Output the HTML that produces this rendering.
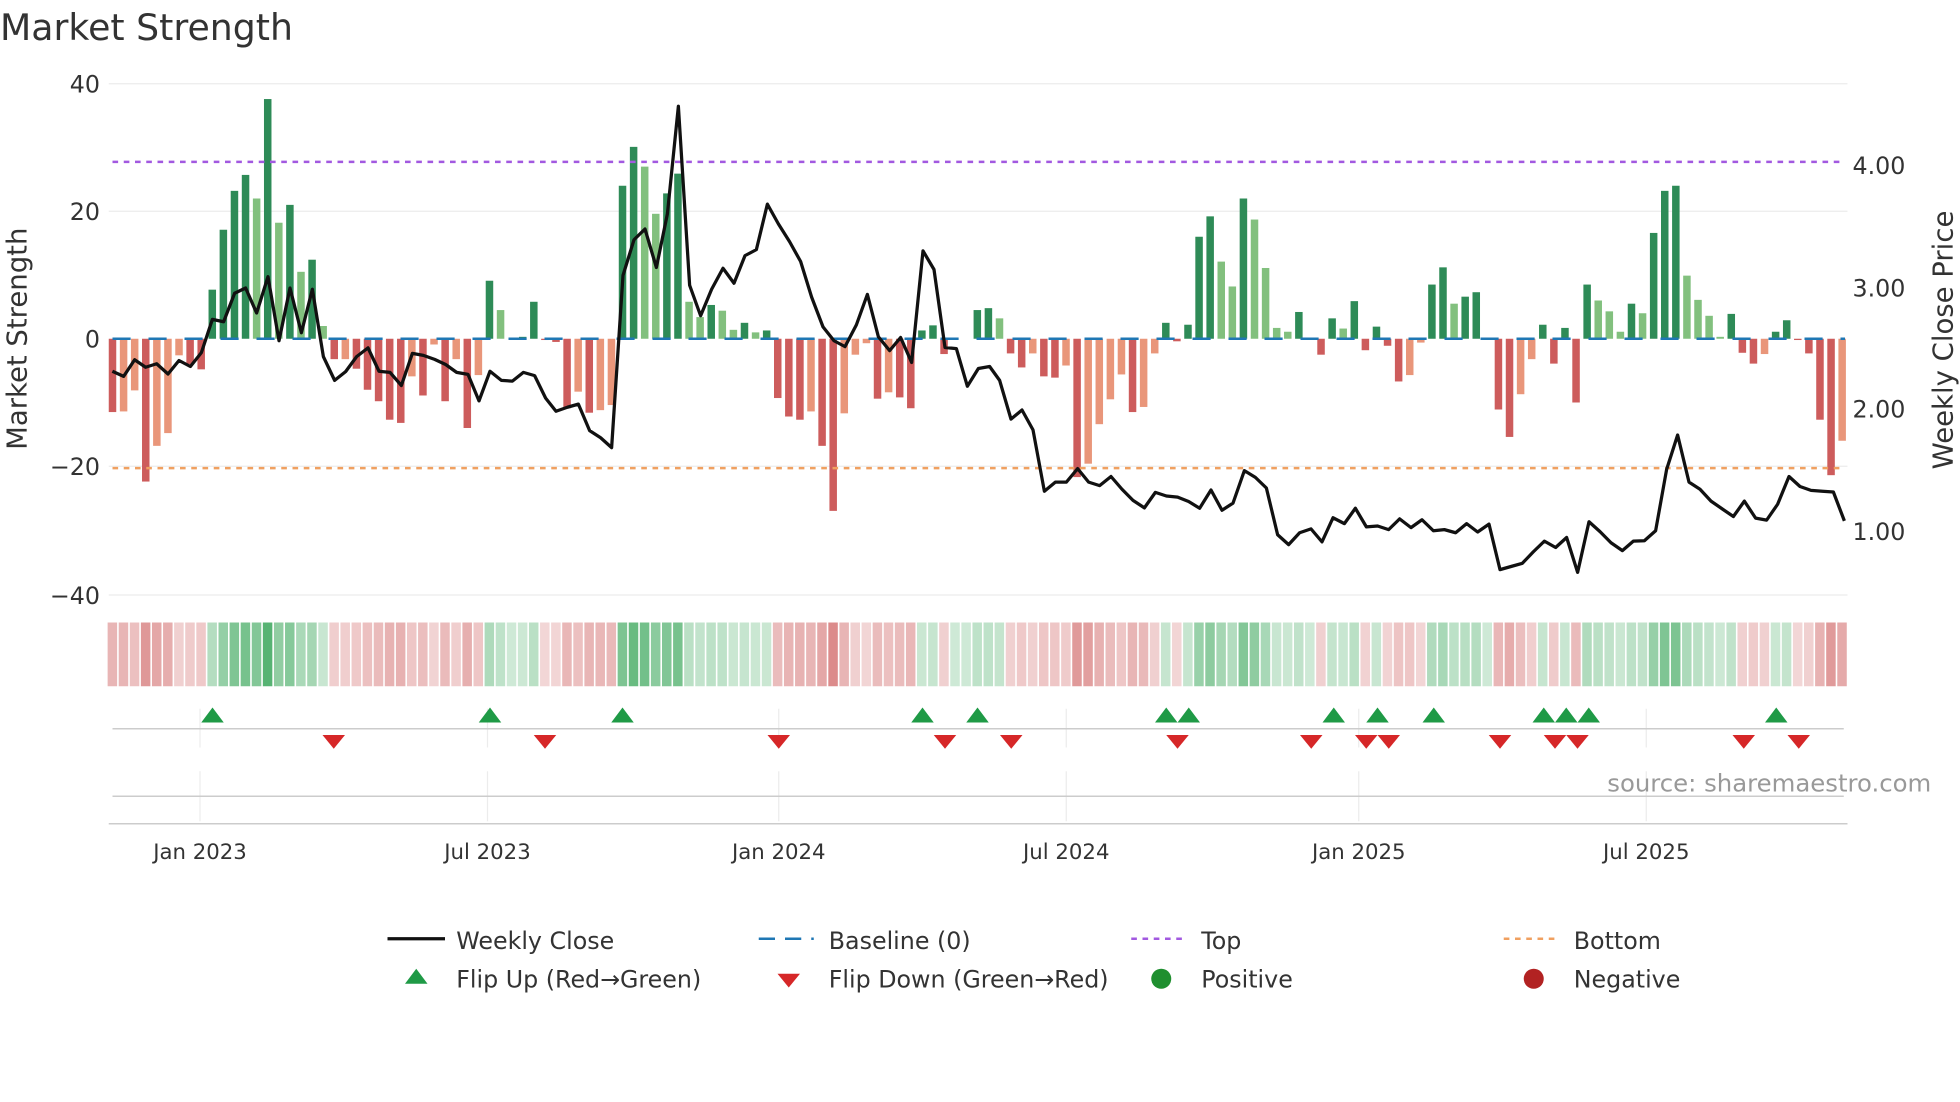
<!DOCTYPE html>
<html><head><meta charset="utf-8">
<style>
html,body{margin:0;padding:0;background:#fff;width:1960px;height:1102px;overflow:hidden}
svg{display:block}
text{font-family:"DejaVu Sans","Liberation Sans",sans-serif;fill:#333}
</style></head>
<body>
<svg id="s" xmlns="http://www.w3.org/2000/svg" width="1960" height="1102" viewBox="0 0 1568 881.6">
<rect width="1568" height="882" fill="#fff"/>
<text x="0" y="32" font-size="29">Market Strength</text>
<g stroke="#ececec" stroke-width="1">
<line x1="87" y1="67" x2="1478" y2="67"/>
<line x1="87" y1="169" x2="1478" y2="169"/>
<line x1="87" y1="373" x2="1478" y2="373"/>
<line x1="87" y1="476" x2="1478" y2="476"/>
</g>
<g id="bars"></g>
<line x1="90" y1="271" x2="1476" y2="271" stroke="#1f77b4" stroke-width="2" stroke-dasharray="14.5 14.3"/>
<line x1="90" y1="129.5" x2="1476" y2="129.5" stroke="#a259e0" stroke-width="2" stroke-dasharray="4.5 4.5"/>
<line x1="90" y1="374.5" x2="1476" y2="374.5" stroke="#f0a060" stroke-width="2" stroke-dasharray="4.5 4.5"/>
<polyline id="price" fill="none" stroke="#111" stroke-width="2.6" stroke-linejoin="round"/>
<g id="strip"></g>
<g font-size="19" text-anchor="end">
<text x="80" y="74">40</text><text x="80" y="176">20</text><text x="80" y="278">0</text>
<text x="80" y="380">−20</text><text x="80" y="483">−40</text>
</g>
<g font-size="19">
<text x="1482" y="139">4.00</text><text x="1482" y="237">3.00</text>
<text x="1482" y="334">2.00</text><text x="1482" y="432">1.00</text>
</g>
<text transform="translate(21,271) rotate(-90)" font-size="22" text-anchor="middle">Market Strength</text>
<text transform="translate(1562,272) rotate(-90)" font-size="22" text-anchor="middle">Weekly Close Price</text>
<g stroke="#ececec" stroke-width="1">
<line x1="160" y1="567" x2="160" y2="598"/><line x1="390" y1="567" x2="390" y2="598"/>
<line x1="623" y1="567" x2="623" y2="598"/><line x1="853" y1="567" x2="853" y2="598"/>
<line x1="1087" y1="567" x2="1087" y2="598"/><line x1="1317" y1="567" x2="1317" y2="598"/>
<line x1="160" y1="617" x2="160" y2="657"/><line x1="390" y1="617" x2="390" y2="657"/>
<line x1="623" y1="617" x2="623" y2="657"/><line x1="853" y1="617" x2="853" y2="657"/>
<line x1="1087" y1="617" x2="1087" y2="657"/><line x1="1317" y1="617" x2="1317" y2="657"/>
</g>
<line x1="90" y1="583" x2="1475" y2="583" stroke="#ccc" stroke-width="1.2"/>
<line x1="90" y1="637" x2="1475" y2="637" stroke="#ccc" stroke-width="1.2"/>
<line x1="87" y1="659" x2="1478" y2="659" stroke="#ccc" stroke-width="1.2"/>
<g id="tri"></g>
<text x="1545" y="633" font-size="19.5" text-anchor="end" style="fill:#999">source: sharemaestro.com</text>
<g font-size="17" text-anchor="middle">
<text x="160" y="687">Jan 2023</text><text x="390" y="687">Jul 2023</text>
<text x="623" y="687">Jan 2024</text><text x="853" y="687">Jul 2024</text>
<text x="1087" y="687">Jan 2025</text><text x="1317" y="687">Jul 2025</text>
</g>
<g font-size="19">
<line x1="310" y1="751" x2="356" y2="751" stroke="#111" stroke-width="2.6"/>
<text x="365" y="759">Weekly Close</text>
<line x1="607" y1="751" x2="651" y2="751" stroke="#1f77b4" stroke-width="2" stroke-dasharray="13 8"/>
<text x="663" y="759">Baseline (0)</text>
<line x1="905" y1="751" x2="950" y2="751" stroke="#a259e0" stroke-width="2" stroke-dasharray="4.5 4.5"/>
<text x="961" y="759">Top</text>
<line x1="1203" y1="751" x2="1248" y2="751" stroke="#f0a060" stroke-width="2" stroke-dasharray="4.5 4.5"/>
<text x="1259" y="759">Bottom</text>
<polygon points="324,787 342,787 333,775" fill="#1f9a46"/>
<text x="365" y="790">Flip Up (Red→Green)</text>
<polygon points="622,779 640,779 631,790" fill="#d62728"/>
<text x="663" y="790">Flip Down (Green→Red)</text>
<circle cx="929" cy="783" r="8" fill="#1f8f2f"/>
<text x="961" y="790">Positive</text>
<circle cx="1227" cy="783" r="8" fill="#b22222"/>
<text x="1259" y="790">Negative</text>
</g>
</svg>
<script>
var NS="http://www.w3.org/2000/svg";
function el(t,a,p){var e=document.createElementNS(NS,t);for(var k in a)e.setAttribute(k,a[k]);p.appendChild(e);return e;}
var B="r-11.5 o-11.4 o-8.1 r-22.4 o-16.8 o-14.8 o-2.6 r-4 r-4.8 d7.7 d17.1 d23.2 d25.7 l22 d37.6 l18.2 d21 l10.5 d12.4 l2 r-3.2 o-3.2 r-4.7 r-8 r-9.8 r-12.7 r-13.2 o-5.9 r-8.9 o-0.9 r-9.8 o-3.2 r-14 o-5.7 d9.1 l4.5 d0 d0.3 d5.8 r-0.2 r-0.5 r-10.9 o-8.3 r-11.6 o-11.2 o-10.4 d24 d30.1 l27 l19.6 d22.8 d25.9 l5.8 l3.4 d5.3 l4.4 l1.4 d2.5 l1 d1.3 r-9.3 r-12.2 r-12.7 o-11.4 r-16.8 r-27 o-11.7 o-2.5 o-0.7 r-9.4 o-8.4 r-9.2 r-10.9 d1.3 d2.1 r-2.4 d0 d0 d4.5 d4.8 l3.2 r-2.3 r-4.5 o-2.3 r-5.9 r-6.1 o-4.2 r-21.7 o-19.6 o-13.4 o-9.5 o-5.6 r-11.5 o-10.7 o-2.3 d2.5 r-0.4 d2.2 d16 d19.2 l12.1 l8.2 d22 l18.7 l11.1 l1.7 l1.1 d4.2 d0 r-2.5 d3.2 l1.6 d5.9 r-1.8 d1.9 r-1.1 r-6.7 o-5.7 o-0.6 d8.5 d11.2 l5.5 d6.6 d7.3 d0 r-11.1 r-15.4 o-8.7 o-3.2 d2.2 r-3.9 d1.7 r-10 d8.5 l6 l4.3 l1.1 d5.5 l4 d16.6 d23.2 d24 l9.9 l6.1 l3.6 l0.3 d3.9 r-2.2 r-3.9 o-2.4 d1.1 d2.9 r-0.2 r-2.3 r-12.7 r-21.4 o-16".split(" ");
var C={d:"#2e8b57",l:"#82c07e",r:"#cd5c5c",o:"#e9967a"};
var gb=document.getElementById("bars"),gs=document.getElementById("strip");
B.forEach(function(s,i){var t=s[0],v=parseFloat(s.slice(1));var x=90+i*8.87;var y0=271,y1=271-5.1*v;
 if(Math.abs(v)>0.05)el("rect",{x:x-3,y:Math.min(y0,y1),width:6,height:Math.abs(y1-y0),fill:C[t]},gb);
 var pos=(t=="d"||t=="l"),a=0.25+Math.min(Math.abs(v)/35,1)*0.6;
 el("rect",{x:x-3.9,y:498,width:7.6,height:51,fill:pos?"#3aa65a":"#cd5c5c","fill-opacity":a.toFixed(2)},gs);
});
var Z=[[105,[[22,737],[56,750],[89,708],[122,727],[155,718],[189,744],[222,710],[256,725],[289,690],[322,606],[356,612],[389,540],[422,527],[455,590],[489,498],[522,660],[555,527],[589,640],[622,530],[655,700],[689,760],[722,738],[755,700],[789,678],[822,737],[855,740],[889,773],[922,692],[955,697],[989,707],[1022,720],[1055,740],[1089,745],[1122,812],[1155,737],[1189,760],[1222,762],[1255,740],[1289,748],[1322,805]]],
[545,[[33,838],[67,828],[100,820],[134,887],[167,905],[200,930],[234,495],[267,405],[300,378],[334,475],[367,340],[400,68],[434,520],[467,597],[500,530],[534,477],[567,515],[600,445],[634,430],[667,315],[700,365],[734,410],[767,460],[800,550],[834,625],[867,660],[900,675],[934,620],[967,543],[1000,650],[1034,685],[1067,652],[1100,715],[1134,433],[1167,480],[1200,677],[1234,680],[1267,775],[1300,730],[1334,725]]],
[985,[[44,760],[78,858],[111,835],[144,885],[178,1040],[211,1017],[244,1017],[278,983],[311,1017],[344,1026],[378,1003],[411,1035],[444,1063],[478,1082],[511,1043],[544,1052],[578,1055],[611,1066],[644,1083],[678,1037],[711,1088],[744,1070],[778,988],[811,1005],[844,1032],[878,1150],[911,1175],[944,1145],[978,1135],[1011,1168],[1044,1107],[1078,1122],[1111,1083],[1144,1130],[1178,1128],[1211,1137],[1244,1110],[1278,1132],[1311,1112]]],
[1425,[[25,1140],[58,1137],[92,1145],[125,1122],[158,1143],[192,1123],[225,1238],[258,1230],[292,1222],[325,1193],[358,1166],[392,1182],[425,1157],[458,1245],[492,1117],[525,1142],[558,1170],[592,1190],[625,1166],[658,1165],[692,1140],[725,985],[758,898],[792,1017],[825,1035],[858,1065],[892,1085],[925,1104],[958,1065],[992,1108],[1025,1113],[1058,1073],[1092,1003],[1125,1028],[1158,1038],[1192,1040],[1225,1042],[1258,1115]]]];
var pts=[];Z.forEach(function(z){z[1].forEach(function(p){pts.push(((p[0]/3+z[0])/1.25).toFixed(1)+","+(271-0.3168*(655-p[1])).toFixed(1));});});
document.getElementById("price").setAttribute("points",pts.join(" "));
var gt=document.getElementById("tri");
[170,392,498,738,782,933,951,1067,1102,1147,1235,1253,1271,1421].forEach(function(x){el("polygon",{points:(x-9)+",578 "+(x+9)+",578 "+x+",566",fill:"#1f9a46"},gt);});
[267,436,623,756,809,942,1049,1093,1111,1200,1244,1262,1395,1439].forEach(function(x){el("polygon",{points:(x-9)+",588 "+(x+9)+",588 "+x+",599",fill:"#d62728"},gt);});
</script>
</body></html>
